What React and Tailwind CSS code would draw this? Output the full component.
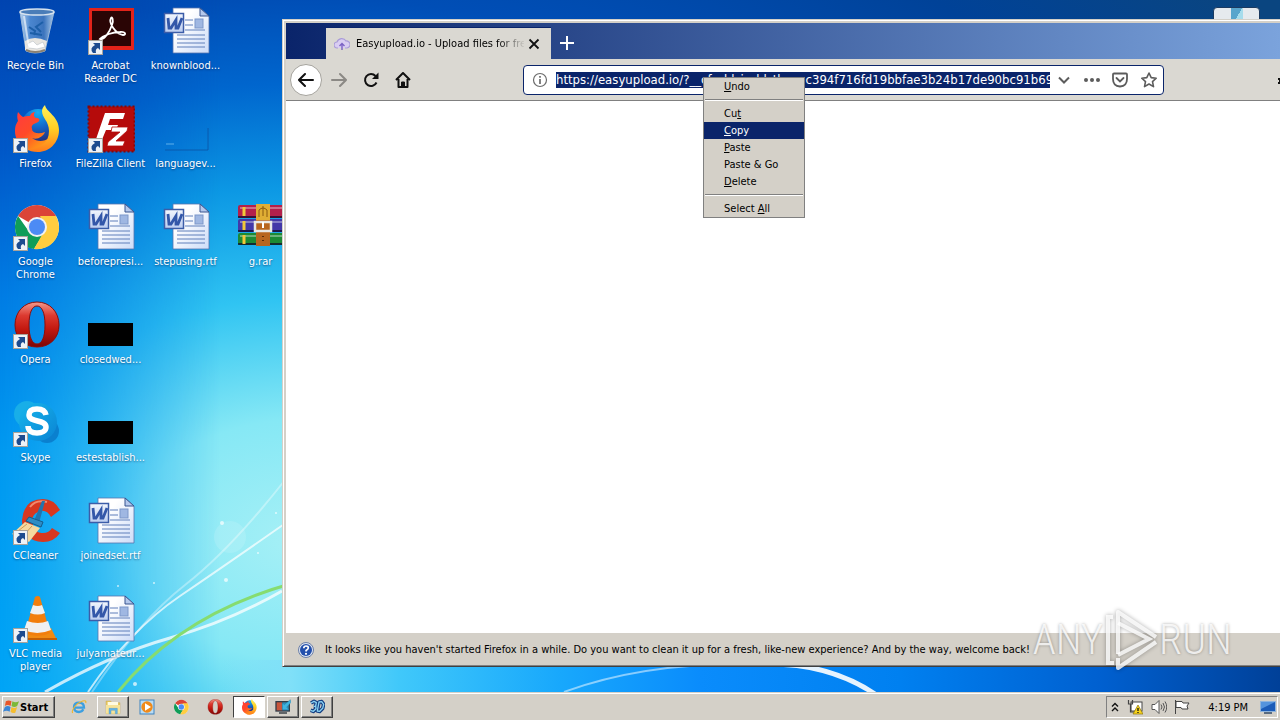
import { useState } from 'react';

const FirefoxIcon = ({ className }) => (
  <svg viewBox="0 0 48 48" className={className}>
    <defs>
      <linearGradient id="ffFlame" x1="0" y1="0.1" x2="0.8" y2="1">
        <stop offset="0" stopColor="#ff3d3d" />
        <stop offset="0.45" stopColor="#ff4a28" />
        <stop offset="0.8" stopColor="#ff8a1a" />
        <stop offset="1" stopColor="#ffa51a" />
      </linearGradient>
      <linearGradient id="ffTail" x1="0.5" y1="0" x2="0.5" y2="1">
        <stop offset="0" stopColor="#fff25a" />
        <stop offset="0.5" stopColor="#ffcf24" />
        <stop offset="1" stopColor="#ff7a1c" />
      </linearGradient>
      <radialGradient id="ffGlobe" cx="0.5" cy="0.1" r="0.9">
        <stop offset="0" stopColor="#12aef2" />
        <stop offset="0.5" stopColor="#1465c8" />
        <stop offset="1" stopColor="#252a78" />
      </radialGradient>
    </defs>
    <circle cx="26" cy="21" r="17" fill="url(#ffGlobe)" />
    <path d="M6 7c2 2 3 4 5 5 2-1 4-1 7-1 1-3 3-4 5-4-2 3-1 5 1 6 3 0 4 1 3 3-1 2-6 2-7 5-1 2 1 3 0 4 2 4 8 4 13 2-2 5-8 8-13 6 5 4 12 4 17 0l3 8C30 51 3 46 3 26c0-5 1-7 3-10-1-3-1-6 0-9z" fill="url(#ffFlame)" />
    <path d="M33 0c1 7 14 11 14 25 0 13-10 22-21 22-5 0-9-1-12-3 14 0 23-6 23-18 0-10-7-13-7-20 0-2 1-4 3-6z" fill="url(#ffTail)" />
  </svg>
);

const ChromeIcon = ({ className }) => (
  <svg viewBox="0 0 48 48" className={className}>
    <circle cx="25" cy="24" r="22" fill="#fff" />
    <path d="M25 24 6 13A22 22 0 0 1 44 13z" fill="#db4437" />
    <path d="M6 13A22 22 0 0 0 22 46L32 30H18z" fill="#0f9d58" />
    <path d="M44 13A22 22 0 0 1 22 46L34 25 28 13z" fill="#ffcd40" />
    <circle cx="25" cy="24" r="10" fill="#f1f1f1" />
    <circle cx="25" cy="24" r="8" fill="#4c8bf5" />
  </svg>
);

const OperaIcon = ({ className }) => (
  <svg viewBox="0 0 48 48" className={className}>
    <defs>
      <linearGradient id="operaRed" x1="0" y1="0" x2="0" y2="1">
        <stop offset="0" stopColor="#f49a8c" />
        <stop offset="0.3" stopColor="#dc3a30" />
        <stop offset="0.6" stopColor="#c3180f" />
        <stop offset="1" stopColor="#7c0606" />
      </linearGradient>
    </defs>
    <path
      d="M25 1C12 1 3 11 3 24s9 22 22 22 22-9 22-22S38 1 25 1zm0 4c5 0 8 7 8 19s-3 19-8 19-8-7-8-19 3-19 8-19z"
      fill="url(#operaRed)"
      fillRule="evenodd"
      stroke="#8d0d0a"
      strokeWidth="1"
    />
  </svg>
);

const RecycleIcon = ({ className }) => (
  <svg viewBox="0 0 48 48" className={className}>
    <defs>
      <linearGradient id="binGlass" x1="0" y1="0" x2="1" y2="0">
        <stop offset="0" stopColor="#b9d3ee" />
        <stop offset="0.3" stopColor="#4a86cf" />
        <stop offset="0.7" stopColor="#3b74bd" />
        <stop offset="1" stopColor="#a9c9ea" />
      </linearGradient>
    </defs>
    <path d="M8 5 14 44q9 4 19 0L42 5z" fill="url(#binGlass)" stroke="#9ab8d8" />
    <path d="M13 34q9-6 22 0l-2 9q-10 4-20 0z" fill="#e7e5e0" />
    <path d="m15 37 6-3 4 4 6-3 2 5-8 2-8-1z" fill="#fff" stroke="#b9bfc6" strokeWidth="0.6" />
    <path d="M14 43q9 4 19 0" stroke="#8b8172" strokeWidth="2" fill="none" />
    <path d="m17 20 6 4-1 4m9-13-7 5 5 5m-11 1 12 2" stroke="#1d5fa8" strokeWidth="2" fill="none" />
    <ellipse cx="25" cy="5" rx="17" ry="3" fill="#4a7db8" stroke="#d6e2ee" strokeWidth="1.500" />
    <path d="m12 9 5 32" stroke="#fff" strokeOpacity="0.6" strokeWidth="2" />
  </svg>
);

const AcrobatIcon = ({ className }) => (
  <svg viewBox="0 0 48 48" className={className}>
    <rect x="2" y="1" width="45" height="42" fill="#e2231a" />
    <rect x="5" y="4" width="39" height="35" fill="#2a0505" />
    <path d="M13 32c4 2 10-8 12-14 2-5 0-9-1-7-3 5 5 16 12 17 4 0 2-4-3-3-7 0-16 3-20 7z" fill="none" stroke="#fff" strokeWidth="1.800" />
  </svg>
);

const WordDocIcon = ({ className }) => (
  <svg viewBox="0 0 48 48" className={className}>
    <defs>
      <linearGradient id="docPaper" x1="0" y1="0" x2="1" y2="1">
        <stop offset="0.3" stopColor="#fff" />
        <stop offset="1" stopColor="#cddcf8" />
      </linearGradient>
      <linearGradient id="docBadge" x1="0" y1="0" x2="0" y2="1">
        <stop offset="0" stopColor="#f2f6fd" />
        <stop offset="1" stopColor="#bccdf0" />
      </linearGradient>
    </defs>
    <path d="M11 1h27l9 8v37H11z" fill="url(#docPaper)" stroke="#5673ae" strokeWidth="0.800" />
    <path d="M38 1v8h9z" fill="#b4c8ec" stroke="#38558f" />
    <path d="M23 13h8M23 18h8M23 23h20M15 28h28M15 32h28M15 36h28M15 40h28" stroke="#5f7fba" />
    <rect x="33" y="12" width="8" height="9" fill="#9fb7e2" stroke="#7c97c9" />
    <rect x="2.500" y="6.500" width="19" height="19" fill="url(#docBadge)" stroke="#3c5da8" strokeWidth="1.500" />
    <path d="m6 11 1 10h2l5-8v8h2l4-10" fill="none" stroke="#3357a9" strokeWidth="2.800" />
  </svg>
);

const FileZillaIcon = ({ className }) => (
  <svg viewBox="0 0 48 48" className={className}>
    <rect x="1.500" y="1.500" width="46" height="45" fill="#b50b0b" stroke="#870707" strokeWidth="2" strokeDasharray="2 2" />
    <path d="M18 8h20l-2 6H23l-2 6h10l-2 5H19l-5 12H8z" fill="#fff" />
    <path d="M25 22h16l-1 4-11 10h9l-2 5H20l1-4 12-10h-9z" fill="#fff" stroke="#b50b0b" strokeWidth="0.800" />
  </svg>
);

// thumbnail with no picture, only its frame shadow
const BlankThumbIcon = ({ className }) => (
  <svg viewBox="0 0 48 48" className={className}>
    <path d="M3 45h43V23" fill="none" stroke="#0b4f9c" strokeOpacity="0.7" />
    <path d="M4 39h8" stroke="#5fb0ea" />
  </svg>
);

const BlackThumbIcon = ({ className }) => (
  <svg viewBox="0 0 48 48" className={className}>
    <rect x="1" y="22" width="45" height="23" fill="#000" />
  </svg>
);

const WinRarIcon = ({ className }) => (
  <svg viewBox="0 0 48 48" className={className}>
    <rect x="1" y="2" width="47" height="13" rx="2" fill="#b3204b" />
    <rect x="1" y="16" width="47" height="13" rx="2" fill="#4338a8" />
    <rect x="1" y="30" width="47" height="12" rx="2" fill="#1c8a34" />
    <path d="M3 5h43M3 19h43M3 33h43" stroke="#fff" strokeOpacity="0.35" strokeWidth="2" />
    <path d="M1 14h47M1 28h47M1 41h47" stroke="#120c2c" strokeWidth="1.500" />
    <path d="M7 4v9M7 18v9M7 32v9" stroke="#f0c83a" strokeWidth="3" />
    <rect x="19" y="1" width="14" height="42" fill="#b8661e" />
    <rect x="19" y="1" width="14" height="16" fill="#e0ae34" />
    <path d="M22 14V7q4-4 8 0v7M26 3v10" stroke="#8a5a10" fill="none" />
    <path d="M18 19h16v9H18z" fill="none" stroke="#e8e8e4" strokeWidth="2.500" />
    <path d="M26 19v6" stroke="#fff" strokeWidth="2" />
    <path d="M26 33v1M26 37v1" stroke="#5a2c08" strokeWidth="2" />
  </svg>
);

const SkypeIcon = ({ className }) => (
  <svg viewBox="0 0 48 48" className={className}>
    <defs>
      <linearGradient id="skypeBlue" x1="0" y1="0" x2="1" y2="1">
        <stop offset="0" stopColor="#17b6ec" />
        <stop offset="1" stopColor="#0a84d4" />
      </linearGradient>
    </defs>
    <circle cx="15" cy="15" r="13" fill="#18aee8" />
    <circle cx="35" cy="32" r="12" fill="#0a80cf" />
    <circle cx="26" cy="23" r="19" fill="url(#skypeBlue)" />
    <path d="M34 16c-1-5-5-6-9-6-5 0-8 2-8 6 0 8 17 4 17 12 0 4-4 6-9 6s-9-2-9-7" fill="none" stroke="#fff" strokeWidth="5.500" />
  </svg>
);

const CCleanerIcon = ({ className }) => (
  <svg viewBox="0 0 48 48" className={className}>
    <path d="M48 13 39 20Q34 11 26 15T21 28t10 8q6 0 9-5l8 5Q42 45 31 45 10 44 10 23 12 2 31 2q11 0 17 11z" fill="#d8371f" />
    <path d="M18 10q6-8 17-5" stroke="#f18a6e" strokeWidth="2" fill="none" />
    <path d="m22 24 8-20h3l-6 22z" fill="#2374ad" />
    <path d="m17 20 14 5-2 5-15-6z" fill="#2e8cc4" stroke="#155c8b" />
    <path d="m13 25 15 6-11 14-17-8z" fill="#f5d8a0" />
    <path d="m6 34 9-7M11 39l9-10" stroke="#cf9b53" />
  </svg>
);

const VlcIcon = ({ className }) => (
  <svg viewBox="0 0 48 48" className={className}>
    <path d="M12 33h27l6 12H5z" fill="#f08a12" />
    <path d="M5 43h40v2H5z" fill="#c35f05" />
    <path d="M23 2q3-2 5 0l10 36q-12 6-25 0z" fill="#f27e0c" />
    <path d="m21 10-3 8q8 3 15 0l-3-8q-4 2-9 0zM15 26l-3 9q13 6 27 0l-3-9q-10 4-21 0z" fill="#f0f0f0" />
  </svg>
);

const IeIcon = ({ className }) => (
  <svg viewBox="0 0 48 48" className={className}>
    <path d="M10 26h29q0-15-15-15T9 25t15 14q9 0 13-8" fill="none" stroke="#3c9fe0" strokeWidth="7" />
    <path d="M5 42C0 34 16 12 35 6q12-3 9 6" fill="none" stroke="#efb52c" strokeWidth="3.500" />
  </svg>
);

const ExplorerIcon = ({ className }) => (
  <svg viewBox="0 0 48 48" className={className}>
    <path d="M3 12V6h14l4 5h24v33H3z" fill="#e6c864" stroke="#c09a3a" />
    <path d="M8 9h31v16H8z" fill="#fffbe2" />
    <path d="M3 18h42v26H3z" fill="#f6e39a" />
    <path d="M12 44V28h25v16h-6V34H18v10z" fill="#62b4e8" stroke="#3a86c0" />
  </svg>
);

const MediaIcon = ({ className }) => (
  <svg viewBox="0 0 48 48" className={className}>
    <rect x="3" y="3" width="42" height="42" fill="#b9dcf4" stroke="#3e83bf" strokeWidth="3" />
    <circle cx="24" cy="24" r="17" fill="#f08a1a" />
    <path d="M18 13v22l18-11z" fill="#fff" />
  </svg>
);

const MonitorTaskIcon = ({ className }) => (
  <svg viewBox="0 0 48 48" className={className}>
    <path d="M1 6h44v32H1z" fill="#333d48" />
    <path d="M5 10h17v24H5z" fill="#c9553b" />
    <path d="M22 10h19v24H22z" fill="#2f8fb8" />
    <path d="M46 2 28 17l-6-5v20h20l-7-7L48 10z" fill="#3fb4e0" stroke="#1b6c98" />
    <path d="M12 40h24v4H12z" fill="#283038" />
  </svg>
);

const ThreeDIcon = ({ className }) => (
  <svg viewBox="0 0 48 48" className={className}>
    <path d="m6 12 9-5 7 4-2 10 1 8-8 8-8-3M14 22h6M30 9l8-1 6 8-3 12-9 9-7-1z" fill="none" stroke="#153f82" strokeWidth="11" strokeLinejoin="round" />
    <path d="m6 12 9-5 7 4-2 10 1 8-8 8-8-3M14 22h6M30 9l8-1 6 8-3 12-9 9-7-1z" fill="none" stroke="#8ad2f4" strokeWidth="4" strokeLinejoin="round" />
  </svg>
);

const WindowsFlag = ({ className }) => (
  <svg viewBox="0 0 18 16" className={className}>
    <path d="M3 2q3-2 6 0L8 7Q5 5 2 7z" fill="#e8562a" />
    <path d="M10 2q3 2 7 0l-2 5q-3 2-6 0z" fill="#7cb83a" />
    <path d="M2 8q3-2 6 0l-1 5Q4 11 0 13z" fill="#3b86d6" />
    <path d="M9 8q3 2 6 0l-2 6q-3 1-5-1z" fill="#f5bd2e" />
  </svg>
);

const ShortcutArrow = () => (
  <svg viewBox="0 0 15 15" className="absolute bottom-0 left-px h-[15px] w-[15px]">
    <rect x="0.500" y="0.500" width="14" height="14" fill="#eef2f7" stroke="#a9a39b" />
    <path d="M5 3h7v7l-2-2q-3 1-2 5H5Q1 8 7 5z" fill="#1d4b8f" />
  </svg>
);

// row by row, null is a free place
const desktopItems = [
  { label: 'Recycle Bin', Icon: RecycleIcon },
  { label: 'Acrobat Reader DC', Icon: AcrobatIcon, shortcut: true },
  { label: 'knownblood...', Icon: WordDocIcon },
  null,
  { label: 'Firefox', Icon: FirefoxIcon, shortcut: true },
  { label: 'FileZilla Client', Icon: FileZillaIcon, shortcut: true },
  { label: 'languagev...', Icon: BlankThumbIcon },
  null,
  { label: 'Google Chrome', Icon: ChromeIcon, shortcut: true },
  { label: 'beforepresi...', Icon: WordDocIcon },
  { label: 'stepusing.rtf', Icon: WordDocIcon },
  { label: 'g.rar', Icon: WinRarIcon },
  { label: 'Opera', Icon: OperaIcon, shortcut: true },
  { label: 'closedwed...', Icon: BlackThumbIcon },
  null,
  null,
  { label: 'Skype', Icon: SkypeIcon, shortcut: true },
  { label: 'estestablish...', Icon: BlackThumbIcon },
  null,
  null,
  { label: 'CCleaner', Icon: CCleanerIcon, shortcut: true },
  { label: 'joinedset.rtf', Icon: WordDocIcon },
  null,
  null,
  { label: 'VLC media player', Icon: VlcIcon, shortcut: true },
  { label: 'julyamateur...', Icon: WordDocIcon },
];

const taskItems = [
  { name: 'Internet Explorer', Icon: IeIcon },
  { name: 'Explorer', Icon: ExplorerIcon, state: 'open' },
  { name: 'Media Player', Icon: MediaIcon },
  { name: 'Chrome', Icon: ChromeIcon },
  { name: 'Opera', Icon: OperaIcon },
  { name: 'Firefox', Icon: FirefoxIcon, state: 'active' },
  { name: 'Display', Icon: MonitorTaskIcon, state: 'open' },
  { name: '3D', Icon: ThreeDIcon, state: 'open' },
];

const taskStates = {
  idle: 'border-transparent',
  open: 'border-t-white border-l-white border-r-[#404040] border-b-[#404040] shadow-[inset_-1px_-1px_#808080]',
  active: 'border-t-[#404040] border-l-[#404040] border-r-white border-b-white bg-white',
};

const Wallpaper = () => (
  <div className="absolute inset-0 bg-[radial-gradient(ellipse_1200px_860px_at_300px_540px,#a6f0f6_0%,#86e8f5_14%,#30c4f2_28%,#0c98e4_41%,#0066ce_53%,#004eb6_63%,#004298_82%,#0a4580_100%)]">
    <div className="absolute inset-0 bg-[linear-gradient(180deg,#0044b0,#0058c8_22%,#007ce4_43%,#0098f0_65%,#00a4f6)] [mask-image:linear-gradient(90deg,#000,transparent_220px)]" />
    {/* floor glow along the bottom edge */}
    <div className="absolute inset-x-0 bottom-0 h-8 bg-[linear-gradient(90deg,transparent_220px,#80e0f8_290px,#40c8fa_400px,#18a8fc_560px,#0a8cfc_700px,#0080f0_900px,#0060d0_1100px,#004098_1280px)]" />
    <svg className="absolute inset-0 h-full w-full" fill="none">
      <path d="M45 692Q110 655 170 638T282 591" stroke="#fff" strokeOpacity="0.75" strokeWidth="3" />
      <path d="M88 692Q130 630 180 596T290 520" stroke="#fff" strokeOpacity="0.7" strokeWidth="2" />
      <path d="M92 692Q140 620 185 585T285 480" stroke="#fff" strokeOpacity="0.35" strokeWidth="2" />
      <path d="M118 692Q180 615 290 584" stroke="#86dc70" strokeWidth="3" />
      <path d="M564 692Q640 664 740 664" stroke="#fff" strokeOpacity="0.5" strokeWidth="2" />
      <path d="M770 664Q830 664 875 694" stroke="#fff" strokeOpacity="0.9" strokeWidth="5" />
      <g fill="#fff" fillOpacity="0.7">
        <circle cx="222" cy="523" r="2" />
        <circle cx="276" cy="513" r="1" />
        <circle cx="226" cy="580" r="2" />
        <circle cx="258" cy="553" r="1" />
        <circle cx="154" cy="583" r="1" />
        <circle cx="118" cy="586" r="1" />
        <circle cx="135" cy="684" r="2" />
        <circle cx="82" cy="561" r="1" />
      </g>
      <circle cx="230" cy="537" r="16" fill="#fff" fillOpacity="0.12" />
    </svg>
  </div>
);

const MenuItem = ({ before = '', accessKey, after = '', active }) => (
  <button
    role="menuitem"
    className={`block h-[17px] w-full pl-5 text-left leading-[17px] ${active ? 'bg-[#0a246a] text-white' : ''}`}
  >
    {before}
    {accessKey && <span className="underline">{accessKey}</span>}
    {after}
  </button>
);

const MenuSeparator = () => <div className="mx-px my-1 h-0.5 border-t border-t-[#808080] bg-white" />;

const ContextMenu = () => (
  <div
    role="menu"
    className="absolute top-[54px] left-[417px] z-10 w-[102px] border border-[#808080] bg-[#d4d0c8] text-black"
  >
    <MenuItem accessKey="U" after="ndo" />
    <MenuSeparator />
    <MenuItem before="Cu" accessKey="t" />
    <MenuItem accessKey="C" after="opy" active />
    <MenuItem accessKey="P" after="aste" />
    <MenuItem before="Paste & Go" />
    <MenuItem accessKey="D" after="elete" />
    <MenuSeparator />
    <MenuItem before="Select " accessKey="A" after="ll" />
  </div>
);

const TabStrip = () => (
  <div className="flex h-9 items-end bg-[linear-gradient(90deg,#0a246a,#7ba3dc)] pl-10">
    <div className="flex h-8 w-[225px] items-center border-t border-[#0a246a] bg-[#dad8d2] pl-2">
      <svg viewBox="0 0 16 16" className="h-4 w-4 shrink-0">
        <path d="M4 12H3a3 3 0 0 1 0-6 5 5 0 0 1 9-1 3.500 3.500 0 0 1 1 7h-2" fill="#d9cdf2" stroke="#a99bd8" strokeWidth="1.200" />
        <path d="M8 14V8M5.500 10 8 7.500l2.500 2.500" fill="none" stroke="#7b62c4" strokeWidth="1.400" />
      </svg>
      <span className="ml-1.5 w-[168px] overflow-hidden whitespace-nowrap [mask-image:linear-gradient(90deg,#000_142px,transparent_170px)]">
        Easyupload.io - Upload files for free
      </span>
      <button aria-label="Close tab" className="ml-1">
        <svg viewBox="0 0 12 12" className="h-3 w-3" stroke="#111" strokeWidth="1.800">
          <path d="m1.500 1.500 9 9m0-9-9 9" />
        </svg>
      </button>
    </div>
    <button aria-label="New tab" className="flex h-8 w-8 items-center justify-center">
      <svg viewBox="0 0 14 14" className="h-3.5 w-3.5" stroke="#fff" strokeWidth="2">
        <path d="M7 0v14M0 7h14" />
      </svg>
    </button>
  </div>
);

const NavBar = () => {
  const [url, setUrl] = useState(
    'https://easyupload.io/?__cf_chl_jschl_tk__=c394f716fd19bbfae3b24b17de90bc91b6968e2'
  );

  return (
    <div className="flex h-[42px] items-center border-b border-[#808080] bg-[#dad8d2] pl-1">
      <button aria-label="Back" className="flex h-8 w-8 items-center justify-center rounded-full border border-[#a5a39d] bg-white">
        <svg viewBox="0 0 16 16" className="h-4 w-4" fill="none" stroke="#111" strokeWidth="2" strokeLinecap="round">
          <path d="M1 8h14M7 2 1 8l6 6" />
        </svg>
      </button>
      <div className="ml-px flex">
        <button aria-label="Forward" className="flex h-8 w-8 items-center justify-center">
          <svg viewBox="0 0 16 16" className="h-4 w-4" fill="none" stroke="#8b8985" strokeWidth="2" strokeLinecap="round">
            <path d="M1 8h14M9 2l6 6-6 6" />
          </svg>
        </button>
        <button aria-label="Reload" className="flex h-8 w-8 items-center justify-center">
          <svg viewBox="0 0 16 16" className="h-4 w-4" fill="none" stroke="#111" strokeWidth="2">
            <path d="M13.500 10.500a6 6 0 1 1-1-6.500" />
            <path d="M15.500 0.500V7H9z" fill="#111" stroke="none" />
          </svg>
        </button>
        <button aria-label="Home" className="flex h-8 w-8 items-center justify-center">
          <svg viewBox="0 0 16 16" className="h-4 w-4" fill="none" stroke="#111" strokeWidth="2" strokeLinejoin="round">
            <path d="m1 8 7-7 7 7M3.500 7v8h9V7" />
            <path d="M6.500 15v-5h3v5z" fill="#111" strokeWidth="1" />
          </svg>
        </button>
      </div>

      <div className="ml-[104px] flex h-[30px] w-[641px] items-center rounded-sm border border-[#0a246a] bg-white pl-2">
        <svg viewBox="0 0 16 16" className="h-4 w-4 shrink-0" fill="none" stroke="#6b6b6b">
          <circle cx="8" cy="8" r="6.500" strokeWidth="1.200" />
          <path d="M8 7v5M8 4v1.800" strokeWidth="1.700" />
        </svg>
        <input
          aria-label="Address"
          value={url}
          onChange={(e) => setUrl(e.target.value)}
          className="ml-2 h-4 w-[494px] bg-[#0a246a] text-[13px] leading-4 text-white outline-none"
        />
        <div className="flex flex-1 items-center justify-between pr-1.5 pl-[7px] text-[#5c5c5c]">
          <button aria-label="Show history">
            <svg viewBox="0 0 14 14" className="h-3.5 w-3.5" fill="none" stroke="currentColor" strokeWidth="2">
              <path d="m2 4.500 5 5 5-5" />
            </svg>
          </button>
          <button aria-label="Page actions">
            <svg viewBox="0 0 16 16" className="h-4 w-4" fill="currentColor">
              <circle cx="2" cy="8" r="2" />
              <circle cx="8" cy="8" r="2" />
              <circle cx="14" cy="8" r="2" />
            </svg>
          </button>
          <button aria-label="Save to Pocket">
            <svg viewBox="0 0 16 16" className="h-4 w-4" fill="none" stroke="currentColor" strokeWidth="1.800">
              <path d="M2 1.500h12q1 0 1 1V7q0 7-7 7.500Q1 14 1 7V2.500q0-1 1-1z" />
              <path d="m4.500 6 3.500 3.500L11.500 6" strokeLinecap="round" />
            </svg>
          </button>
          <button aria-label="Bookmark">
            <svg viewBox="0 0 16 16" className="h-4 w-4" fill="none" stroke="currentColor" strokeWidth="1.600" strokeLinejoin="round">
              <path d="m8 1 2.200 4.600 5 .6-3.700 3.400 1 5L8 12l-4.500 2.600 1-5L.8 6.200l5-.6z" />
            </svg>
          </button>
        </div>
      </div>
      <svg viewBox="0 0 3 12" className="ml-auto h-3 w-[3px]" fill="#111">
        <path d="M1 4h2v2H1zM2 6h1v2H2zM1 8h2v2H1z" />
      </svg>
    </div>
  );
};

const BrowserWindow = () => (
  <section
    aria-label="Firefox"
    className="absolute top-[19px] right-0 bottom-[25px] left-[282px] flex flex-col border-t border-b border-l border-t-[#d4d0c8] border-b-[#404040] border-l-[#d4d0c8] bg-[#d4d0c8] shadow-[inset_1px_1px_#fff,inset_0_-1px_#808080]"
  >
    <div className="relative mt-[3px] ml-[3px] flex flex-1 flex-col">
      <TabStrip />
      <NavBar />
      <main className="flex-1 bg-white" />
      <div className="flex h-[33px] items-center pl-3">
        <svg viewBox="0 0 16 16" className="h-4 w-4">
          <circle cx="8" cy="8" r="7.500" fill="#dfe6f2" stroke="#6b7fa8" />
          <circle cx="8" cy="8" r="6" fill="#2450ac" />
          <path d="M5.800 6.300q0-2.300 2.300-2.300t2.200 2q0 1-2.200 2.500v1" fill="none" stroke="#fff" strokeWidth="1.700" />
          <circle cx="8" cy="11.800" r="1.100" fill="#fff" />
        </svg>
        <p className="ml-[11px] whitespace-nowrap">
          It looks like you haven't started Firefox in a while. Do you want to clean it up for a fresh, like-new
          experience? And by the way, welcome back!
        </p>
      </div>
      <ContextMenu />
    </div>
  </section>
);

const Watermark = () => (
  <div className="pointer-events-none absolute right-12 bottom-5 flex h-16 items-center font-['Roboto_Condensed','Liberation_Sans_Narrow',sans-serif] text-[42px] leading-none font-light text-white/80 [text-shadow:0_0_3px_rgba(0,0,0,0.35)]">
    <span>ANY</span>
    <svg viewBox="0 0 56 64" className="h-16 w-14 drop-shadow-[0_0_2px_rgba(0,0,0,0.4)]" fill="none" stroke="#fff" strokeOpacity="0.8" strokeWidth="4">
      <path d="M10 9H5v46h6" />
      <path d="M15 46V4l38 25" strokeLinejoin="round" />
      <path d="M15 15 46 31 15 47" />
      <path d="M15 50v10l38-26" strokeLinejoin="round" />
    </svg>
    <span>RUN</span>
  </div>
);

const Taskbar = () => (
  <footer className="relative flex h-7 items-end border-t border-[#d4d0c8] bg-[#d4d0c8] px-0.5 pb-0.5 shadow-[inset_0_1px_#fff]">
    <button className="flex h-[22px] w-[53px] items-center border border-t-white border-r-[#404040] border-b-[#404040] border-l-white text-[11px] font-bold shadow-[inset_-1px_-1px_#808080]">
      <WindowsFlag className="h-4 w-[17px]" />
      Start
    </button>
    <nav className="ml-2 flex gap-0.5">
      {taskItems.map(({ name, Icon, state = 'idle' }) => (
        <button key={name} aria-label={name} className={`flex h-[22px] w-8 items-center justify-center border ${taskStates[state]}`}>
          <Icon className="h-4 w-4" />
        </button>
      ))}
    </nav>
    <div className="ml-auto flex h-[22px] w-[172px] items-center justify-between border border-t-[#808080] border-r-white border-b-white border-l-[#808080] pr-px pl-1">
      <svg viewBox="0 0 8 10" className="h-2.5 w-2" fill="none" stroke="#111" strokeWidth="1.400">
        <path d="m1 4.500 3-3 3 3M1 9l3-3 3 3" />
      </svg>
      <svg viewBox="0 0 16 16" className="h-4 w-4">
        <rect x="4" y="3" width="11" height="9" fill="#fff" stroke="#444" />
        <path d="M1.500 1v4h4V1M3.500 5v8h4" fill="none" stroke="#444" strokeWidth="1.200" />
        <path d="m11 6 5 9H6z" fill="#f7d31c" stroke="#8c7408" strokeWidth="0.700" />
        <path d="M11 9v3M11 13v1" stroke="#111" strokeWidth="1.300" />
      </svg>
      <svg viewBox="0 0 16 16" className="h-4 w-4" fill="none" stroke="#555">
        <path d="M1 5.500h3l4-4v13l-4-4H1z" fill="#fff" />
        <path d="M10 5.500q2 2.500 0 5M12 4q3 4 0 8M14 2.500q3.500 5.500 0 11" />
      </svg>
      <svg viewBox="0 0 16 16" className="h-4 w-4" fill="#fff" stroke="#444">
        <path d="M1.500 1v14M2 2.500h6l1 1.500h6l-2 3 1 3H8L7 8.500H2z" />
      </svg>
      <time className="ml-2.5">4:19 PM</time>
      <svg viewBox="0 0 16 16" className="ml-1 h-4 w-4">
        <rect x="0.500" y="2.500" width="15" height="10" fill="#1c5cb8" stroke="#8fb4dc" />
        <path d="M1 3h14L1 10z" fill="#5594dd" />
        <path d="M4 14h8" stroke="#5a6b80" strokeWidth="2" />
      </svg>
    </div>
  </footer>
);

const App = () => {
  return (
    <div className="relative flex h-screen flex-col overflow-hidden bg-[#0078d8] font-['DejaVu_Sans_Condensed','Noto_Sans',sans-serif] text-[11px] leading-[13px] text-black">
      <div className="relative flex-1">
        <Wallpaper />
        {/* desktop gadget behind the window */}
        <div className="absolute top-[7px] right-5 flex h-5 w-[47px] justify-center rounded-t-sm border border-[#1b3a60] bg-[#e6eaee]">
          <div className="w-3 bg-[linear-gradient(120deg,#58a5cc_50%,#a6dcec_50%)]" />
        </div>
        <div className="relative -ml-0.5 grid auto-rows-[98px] grid-cols-[repeat(4,75px)]">
          {desktopItems.map((item, i) =>
            item ? (
              <button key={item.label} className="flex flex-col items-center pt-[7px] text-white">
                <span className="relative h-12 w-12">
                  <item.Icon className="h-12 w-12" />
                  {item.shortcut && <ShortcutArrow />}
                </span>
                <span className="mt-1 [text-shadow:0_1px_2px_rgba(0,30,80,0.6)]">{item.label}</span>
              </button>
            ) : (
              <div key={i} />
            )
          )}
        </div>
        <BrowserWindow />
        <Watermark />
      </div>
      <Taskbar />
    </div>
  );
};

export default App;
